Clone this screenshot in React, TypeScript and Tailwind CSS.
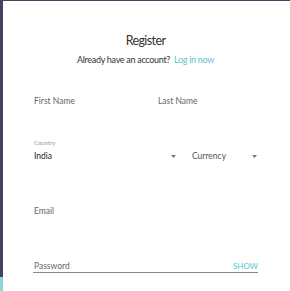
import React from 'react';

function Caret() {
  return (
    <svg width="5" height="3" viewBox="0 0 5 3" className="block">
      <path d="M0 0 L5 0 L2.5 3 Z" fill="#777" />
    </svg>
  );
}

export default function App() {
  return (
    <div
      className="w-[290px] h-[291px] flex bg-white overflow-hidden"
      style={{ fontFamily: 'Lato, "Noto Sans", sans-serif' }}
    >
      <div className="w-[3px] flex flex-col shrink-0">
        <div className="h-[277px] bg-[#4b3f62]" />
        <div className="flex-1 bg-[#8fd3d4]" />
      </div>
      <div className="flex-1 border-t border-[#4b3f62] pl-[30px] pr-[32px]">
        <div className="mt-[32px] h-[16px] leading-[16px] text-center text-[12.5px] tracking-[-0.6px] text-[#333]">Register</div>
        <div className="mt-[5px] h-[12px] leading-[12px] text-center text-[9px] tracking-[-0.3px] text-[#333]">
          Already have an account? <span className="ml-[2px] text-[#56c5d0]">Log in now</span>
        </div>
        <div className="mt-[29px] h-[12px] leading-[12px] flex text-[8.5px] text-[#666]">
          <div className="w-[125px] pl-[1px]">First Name</div>
          <div>Last Name</div>
        </div>
        <div className="mt-[32px] h-[8px] leading-[8px] pl-[1px] text-[6px] text-[#999]">Country</div>
        <div className="mt-[3px] h-[12px] leading-[12px] flex items-center text-[8.5px]">
          <div className="w-[145px] pl-[1px] flex items-center justify-between pr-[2px] text-[#222]">
            <span>India</span>
            <Caret />
          </div>
          <div className="ml-[14px] flex-1 flex items-center justify-between pr-[1px] text-[#555]">
            <span>Currency</span>
            <Caret />
          </div>
        </div>
        <div className="mt-[43px] h-[12px] leading-[12px] pl-[1px] text-[8.5px] text-[#666]">Email</div>
        <div className="mt-[43px] h-[13px] leading-[12px] flex justify-between border-b border-[#888] text-[8.5px]">
          <span className="pl-[1px] text-[#666]">Password</span>
          <span className="text-[8px] text-[#56c5d0]">SHOW</span>
        </div>
      </div>
    </div>
  );
}
